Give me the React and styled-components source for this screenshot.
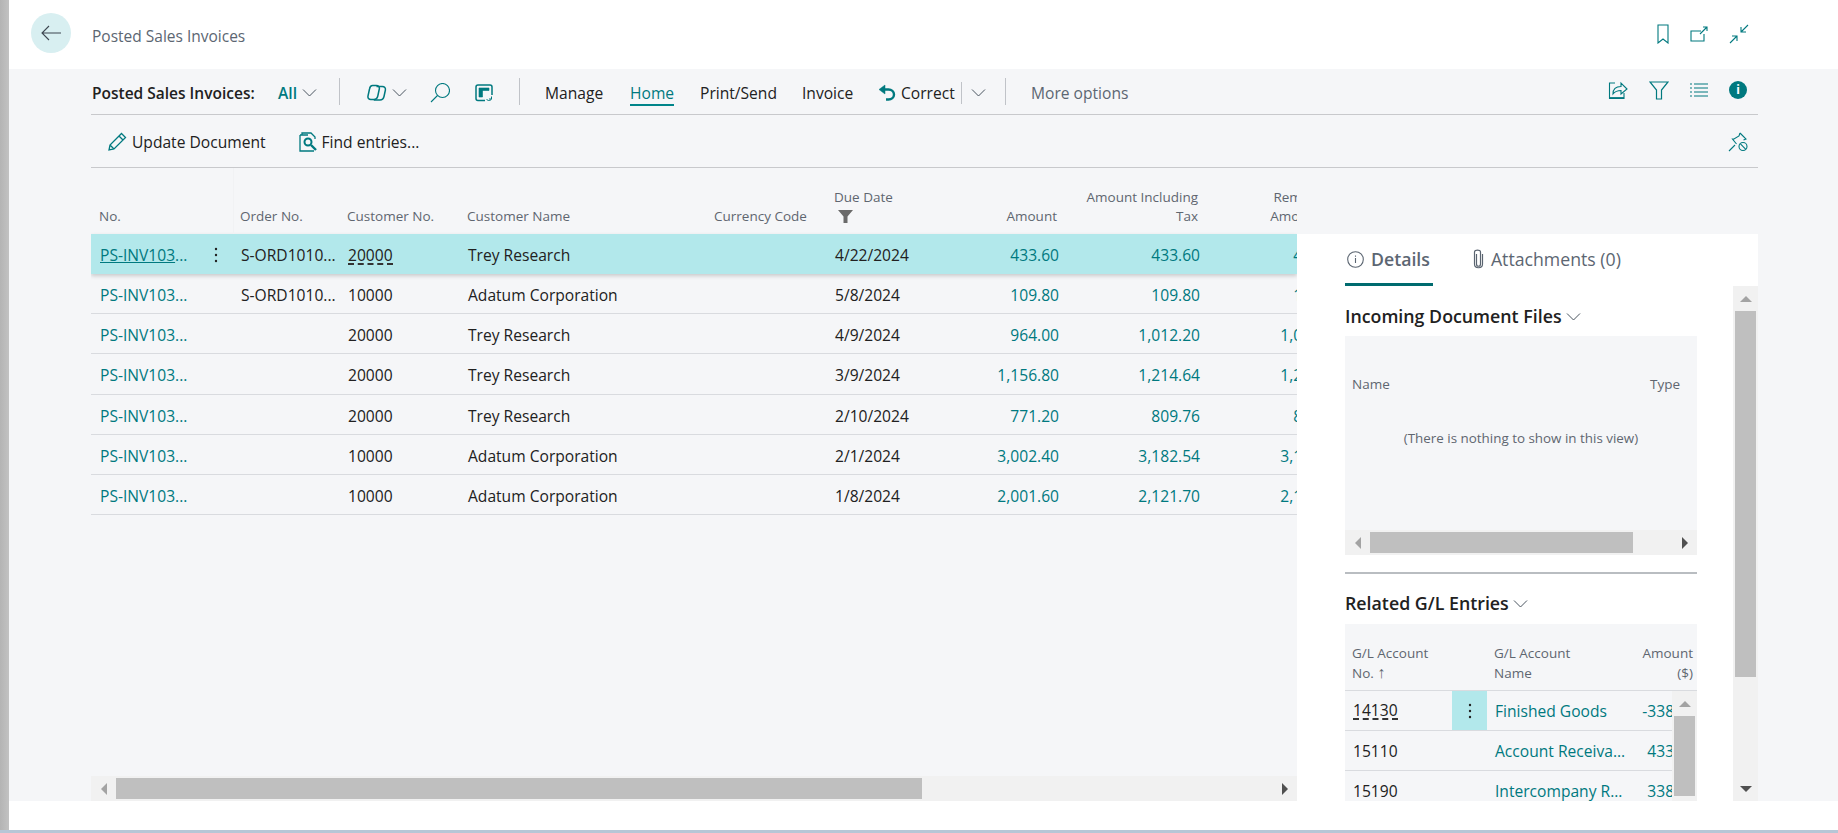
import styled, { createGlobalStyle } from 'styled-components';

const teal = '#00797f';

const invoices = [
  { no: 'PS-INV103...', order: 'S-ORD1010...', cust: '20000', name: 'Trey Research', due: '4/22/2024', amount: '433.60', incl: '433.60', rem: '433.60' },
  { no: 'PS-INV103...', order: 'S-ORD1010...', cust: '10000', name: 'Adatum Corporation', due: '5/8/2024', amount: '109.80', incl: '109.80', rem: '109.80' },
  { no: 'PS-INV103...', order: '', cust: '20000', name: 'Trey Research', due: '4/9/2024', amount: '964.00', incl: '1,012.20', rem: '1,012.20' },
  { no: 'PS-INV103...', order: '', cust: '20000', name: 'Trey Research', due: '3/9/2024', amount: '1,156.80', incl: '1,214.64', rem: '1,214.64' },
  { no: 'PS-INV103...', order: '', cust: '20000', name: 'Trey Research', due: '2/10/2024', amount: '771.20', incl: '809.76', rem: '809.76' },
  { no: 'PS-INV103...', order: '', cust: '10000', name: 'Adatum Corporation', due: '2/1/2024', amount: '3,002.40', incl: '3,182.54', rem: '3,182.54' },
  { no: 'PS-INV103...', order: '', cust: '10000', name: 'Adatum Corporation', due: '1/8/2024', amount: '2,001.60', incl: '2,121.70', rem: '2,121.70' },
];

const glEntries = [
  { no: '14130', name: 'Finished Goods', amount: '-338.00' },
  { no: '15110', name: 'Account Receiva...', amount: '433.60' },
  { no: '15190', name: 'Intercompany R...', amount: '338.00' },
];

const Chevron = ({ w = 15 }) => (
  <svg width={w} height={w} viewBox="0 0 15 15" fill="none" stroke="#4a5560" strokeWidth="1">
    <path d="M1 4.500l6.500 6.500L14 4.500" />
  </svg>
);

const Ico = ({ w = 20, h = 20, vb, children, sw = 1.1, color = teal }) => (
  <svg width={w} height={h} viewBox={vb || `0 0 ${w} ${h}`} fill="none" stroke={color} strokeWidth={sw}>
    {children}
  </svg>
);

const Dots = () => (
  <svg width="4" height="18" viewBox="0 0 4 18" fill="#222">
    <circle cx="2" cy="3" r="1.200" />
    <circle cx="2" cy="9" r="1.200" />
    <circle cx="2" cy="15" r="1.200" />
  </svg>
);

export default function App() {
  return (
    <>
      <GlobalStyle />
      <Page>
        <Strip />
        <Main>
          <TopBar>
            <BackButton>
              <Ico w={22} h={18} color="#3c4650" sw={1.1}>
                <path d="M21 9H2M9 2 2 9l7 7" />
              </Ico>
            </BackButton>
            <PageTitle>Posted Sales Invoices</PageTitle>
            <TopIcons>
              <Ico w={12} h={20}><path d="M1 1h10v18l-5-4-5 4z" /></Ico>
              <Ico w={18} h={16}><path d="M11 5H1v10h13V8M10 8l7-7M13 1h4v4" /></Ico>
              <Ico w={20} h={20}><path d="M19 1l-7 7M12 3v5h5M1 19l7-7M3 12h5v5" /></Ico>
            </TopIcons>
          </TopBar>
          <Content>
            <ActionBar>
              <Slot $w={186}><ListLabel>Posted Sales Invoices:</ListLabel></Slot>
              <Slot $w={61}><ViewName>All</ViewName><Chevron /></Slot>
              <Divider $w={28} />
              <Slot $w={63}>
                <Ico w={20} h={20} sw={1.5}>
                  <path d="M5.500 2.500h3.800c2.200 0 3.400 1.500 3 3.500l-1.500 7c-.5 2.300-1.900 3.500-4 3.500H3.800c-2 0-3.200-1.600-2.800-3.500L2.500 6c.4-2.200 1.500-3.500 3-3.500z" />
                  <path d="M9.500 3.500h5.800c2.200 0 3.500 1.500 3.100 3.500L17 13.500c-.5 2.200-2 3.500-4 3.500H6.800" />
                </Ico>
                <Chevron />
              </Slot>
              <Slot $w={45}>
                <Ico w={20} h={20}>
                  <circle cx="12.500" cy="7.500" r="7" />
                  <path d="M7.500 12.500 1 19" />
                </Ico>
              </Slot>
              <Slot $w={44}>
                <Ico w={18} h={18} sw={1.5}>
                  <path d="M10 16.500H3a2 2 0 0 1-2-2V3a2 2 0 0 1 2-2h12a2 2 0 0 1 2 2v8" />
                  <path d="M4 4h10v2.500H4zM4 6.500h3.500V13H4z" fill={teal} strokeWidth="0.600" />
                  <path d="M11.500 15c1 2 4 2 5 0M16.500 12.500V15H14" strokeWidth="1" />
                </Ico>
              </Slot>
              <Divider $w={26} />
              <Slot $w={85}><MenuItem>Manage</MenuItem></Slot>
              <Slot $w={70}><MenuItem $active>Home</MenuItem></Slot>
              <Slot $w={102}><MenuItem>Print/Send</MenuItem></Slot>
              <Slot $w={76}><MenuItem>Invoice</MenuItem></Slot>
              <Slot $w={83}>
                <Ico w={18} h={18} sw={2.4}>
                  <path d="M7 1 1 5.500 7 10z" fill={teal} strokeWidth="0.500" />
                  <path d="M6 5.500h4.500c3 0 5.500 2 5.500 5s-2.500 5-5.500 5H8" />
                </Ico>
                <MenuItem>Correct</MenuItem>
              </Slot>
              <SplitChevron><Chevron /></SplitChevron>
              <Divider $w={26} />
              <MoreOptions>More options</MoreOptions>
              <BarIcons>
                <Ico w={20} h={20}>
                  <path d="M7 3H1.500v15.500H16V13" />
                  <path d="M1.500 18h14.500" strokeWidth="1.800" />
                  <path d="M5 14c0-5 3-7.500 8-7.500V3l6 6-6 5v-3.500c-4 0-6 1-8 3.500z" />
                </Ico>
                <Ico w={20} h={20} sw={1.2}><path d="M1 2h18l-6.500 8v9h-5v-9z" /></Ico>
                <Ico w={18} h={14} sw={1}><path d="M0 1h2M4 1h14M0 5h2M4 5h14M0 9h2M4 9h14M0 13h2M4 13h14" /></Ico>
                <InfoDot>i</InfoDot>
              </BarIcons>
            </ActionBar>
            <SubBar>
              <SubAction>
                <Ico w={19} h={19} sw={1.3}><path d="M13.500 1.500l4 4L6 17l-5 1 1-5zM11 4l4 4M2 13l4 4" /></Ico>
                Update Document
              </SubAction>
              <SubAction>
                <Ico w={18} h={20} sw={1.3}>
                  <path d="M3 3V1h9l4 4v2M1 3h8M1 3v16h14" />
                  <circle cx="9" cy="10" r="3.500" strokeWidth="2" />
                  <path d="M12 13l5 5" strokeWidth="2.400" />
                </Ico>
                Find entries...
              </SubAction>
              <PinSlot>
                <Ico w={20} h={20}>
                  <path d="M12 1l6 6-2.500 1M12 1l-1 3-5 3-1.500 0 4 5M1 19l6-6" />
                  <circle cx="15" cy="14.500" r="4" />
                  <path d="M12.200 11.700l5.600 5.600" />
                </Ico>
              </PinSlot>
            </SubBar>
            <Body>
              <TableArea>
                <TableScroll>
                  <HeadRow>
                    <HeadCell $frozen>No.</HeadCell>
                    <HeadCell>Order No.</HeadCell>
                    <HeadCell>Customer No.</HeadCell>
                    <HeadCell>Customer Name</HeadCell>
                    <HeadCell>Currency Code</HeadCell>
                    <HeadCell>
                      Due Date
                      <FilterMark>
                        <svg width="15" height="13" viewBox="0 0 15 13" fill="#6a6a6a">
                          <path d="M0 0h15L9.500 6.500V13h-4V6.500z" />
                        </svg>
                      </FilterMark>
                    </HeadCell>
                    <HeadCell $right>Amount</HeadCell>
                    <HeadCell $right>Amount Including<br />Tax</HeadCell>
                    <HeadCell $right>Remaining<br />Amount ($)</HeadCell>
                  </HeadRow>
                  {invoices.map((inv, i) => (
                    <DataRow key={i} $selected={i === 0} $top={i === 0 ? 1 : i === 1 ? 2 : 3}>
                      <NoCell>
                        <InvoiceLink>
                          {i === 0 ? <u>PS-INV103</u> : 'PS-INV103'}...
                        </InvoiceLink>
                        {i === 0 && <Dots />}
                      </NoCell>
                      <Cell>{inv.order}</Cell>
                      <Cell>{i === 0 ? <DashedValue>{inv.cust}</DashedValue> : inv.cust}</Cell>
                      <Cell>{inv.name}</Cell>
                      <Cell />
                      <Cell>{inv.due}</Cell>
                      <Cell $right $link>{inv.amount}</Cell>
                      <Cell $right $link>{inv.incl}</Cell>
                      <Cell $right $link>{inv.rem}</Cell>
                    </DataRow>
                  ))}
                </TableScroll>
                <HScroll>
                  <ArrowBox><ArrowLeft /></ArrowBox>
                  <Thumb $size={806} />
                  <Spacer />
                  <ArrowBox><ArrowRight /></ArrowBox>
                </HScroll>
              </TableArea>
              <FactBox>
                <Tabs>
                  <Tab $active>
                    <Ico w={17} h={17} color="#5a6470">
                      <circle cx="8.500" cy="8.500" r="7.800" />
                      <path d="M8.500 7v5M8.500 4.500v1.200" />
                    </Ico>
                    Details
                  </Tab>
                  <Tab>
                    <Ico w={11} h={20} color="#5a6470" sw={1.2}>
                      <path d="M3.500 5v10c0 3 4 3 4 0V3c0-2.500-6-2.500-6 0v12c0 5 8 5 8 0V5" />
                    </Ico>
                    Attachments (0)
                  </Tab>
                </Tabs>
                <FactBody>
                  <FactContent>
                    <PartTitle>Incoming Document Files<Chevron /></PartTitle>
                    <EmptyPart>
                      <EmptyHead>
                        <span>Name</span>
                        <span>Type</span>
                      </EmptyHead>
                      <EmptyText>(There is nothing to show in this view)</EmptyText>
                      <HScroll>
                        <ArrowBox><ArrowLeft /></ArrowBox>
                        <Thumb $size={263} />
                        <Spacer />
                        <ArrowBox><ArrowRight /></ArrowBox>
                      </HScroll>
                    </EmptyPart>
                    <PartRule />
                    <PartTitle $short>Related G/L Entries<Chevron /></PartTitle>
                    <GlPart>
                      <GlHead>
                        <GlHeadCell>G/L Account<br />No. <SortUp>↑</SortUp></GlHeadCell>
                        <span />
                        <GlHeadCell>G/L Account<br />Name</GlHeadCell>
                        <GlHeadCell $right>Amount<br />($)</GlHeadCell>
                      </GlHead>
                      <GlBody>
                        <GlRows>
                          {glEntries.map((e, i) => (
                            <GlRow key={e.no}>
                              <GlNo>{i === 0 ? <DashedValue>{e.no}</DashedValue> : e.no}</GlNo>
                              <GlActions $on={i === 0}>{i === 0 && <Dots />}</GlActions>
                              <GlLink>{e.name}</GlLink>
                              <GlAmount>{e.amount}</GlAmount>
                            </GlRow>
                          ))}
                        </GlRows>
                        <VScroll>
                          <ArrowBox><ArrowUp /></ArrowBox>
                          <Thumb $size={80} $vertical />
                        </VScroll>
                      </GlBody>
                    </GlPart>
                  </FactContent>
                  <VScroll>
                    <ArrowBox><ArrowUp /></ArrowBox>
                    <Thumb $size={366} $vertical />
                    <Spacer />
                    <ArrowBox><ArrowDown /></ArrowBox>
                  </VScroll>
                </FactBody>
              </FactBox>
            </Body>
          </Content>
          <Footer />
        </Main>
      </Page>
      <BottomLine />
    </>
  );
}

const GlobalStyle = createGlobalStyle`
  html, body { margin: 0; padding: 0; background: #fff; overflow: hidden; }
  body { font-family: "Open Sans", "Noto Sans", sans-serif; color: #212121; }
  * { box-sizing: border-box; }
`;

const Page = styled.div`
  display: flex;
  height: 830px;
`;

const Strip = styled.div`
  width: 9px;
  flex: none;
  background: linear-gradient(90deg, #b4b4b4, #c2c2c2);
`;

const Main = styled.div`
  flex: 1;
  min-width: 0;
  display: flex;
  flex-direction: column;
`;

const BottomLine = styled.div`
  height: 3px;
  background: #b7c6d6;
`;

const TopBar = styled.div`
  height: 69px;
  flex: none;
  display: flex;
  align-items: center;
  padding: 0 89px 3px 22px;
  background: #fff;
`;

const BackButton = styled.div`
  width: 40px;
  height: 40px;
  border-radius: 50%;
  background: #d8eff1;
  display: flex;
  align-items: center;
  justify-content: center;
`;

const PageTitle = styled.div`
  margin-left: 21px;
  padding-top: 6px;
  font-size: 15.500px;
  color: #5c6672;
`;

const TopIcons = styled.div`
  margin-left: auto;
  margin-top: 1px;
  display: flex;
  align-items: center;
  gap: 21px;
`;

const Content = styled.div`
  flex: 1;
  min-height: 0;
  display: flex;
  flex-direction: column;
  padding: 0 80px 0 82px;
  background: #f5f6f8;
`;

const ActionBar = styled.div`
  height: 46px;
  flex: none;
  display: flex;
  align-items: center;
  padding: 2px 11px 0 1px;
  border-bottom: 1px solid #c8c9cc;
  font-size: 15.600px;
`;

const Slot = styled.div`
  width: ${p => p.$w}px;
  flex: none;
  display: flex;
  align-items: center;
  gap: 5px;
  white-space: nowrap;
`;

const ListLabel = styled.span`
  font-weight: 600;
  font-size: 15.500px;
`;

const ViewName = styled.span`
  color: ${teal};
  font-weight: 600;
`;

const Divider = styled.div`
  width: ${p => p.$w}px;
  flex: none;
  height: 27px;
  margin-top: -2px;
  background: linear-gradient(#c0c3c8, #c0c3c8) left center / 1px 100% no-repeat;
`;

const MenuItem = styled.span`
  display: inline-block;
  padding: 3px 0 0;
  border-bottom: 2px solid ${p => (p.$active ? '#00858a' : 'transparent')};
  color: ${p => (p.$active ? '#00797f' : '#212121')};
`;

const SplitChevron = styled.div`
  width: 44px;
  flex: none;
  height: 22px;
  display: flex;
  align-items: center;
  padding-left: 9px;
  border-left: 1px solid #c0c3c8;
`;

const MoreOptions = styled.span`
  color: #5c6672;
`;

const BarIcons = styled.div`
  margin-left: auto;
  display: flex;
  align-items: center;
  gap: 21px;
  margin-bottom: 6px;
`;

const InfoDot = styled.div`
  width: 18px;
  height: 18px;
  border-radius: 50%;
  background: ${teal};
  color: #fff;
  font-size: 12px;
  font-weight: 700;
  line-height: 18px;
  text-align: center;
`;

const SubBar = styled.div`
  height: 53px;
  flex: none;
  display: flex;
  align-items: center;
  gap: 33px;
  padding: 1px 10px 0 17px;
  border-bottom: 1px solid #c8c9cc;
  font-size: 15.600px;
`;

const SubAction = styled.div`
  display: flex;
  align-items: center;
  gap: 5px;
`;

const PinSlot = styled.div`
  margin-left: auto;
  display: flex;
`;

const Body = styled.div`
  flex: 1;
  min-height: 0;
  display: flex;
`;

const TableArea = styled.div`
  width: 1206px;
  flex: none;
  display: flex;
  flex-direction: column;
  justify-content: space-between;
`;

const TableScroll = styled.div`
  overflow: hidden;
`;

const columns = '143px 107px 120px 247px 120px 112px 126px 141px 142px';

const HeadRow = styled.div`
  width: 1258px;
  height: 66px;
  display: grid;
  grid-template-columns: ${columns};
  align-items: end;
`;

const HeadCell = styled.div`
  padding: ${p => (p.$frozen ? '39px' : '0')} ${p => (p.$right ? '9px' : '4px')} 8px ${p => (p.$frozen ? '8px' : '6px')};
  align-self: ${p => (p.$frozen ? 'stretch' : 'end')};
  font-size: 13.500px;
  line-height: 19px;
  color: #5f6670;
  text-align: ${p => (p.$right ? 'right' : 'left')};
  border-right: ${p => (p.$frozen ? '1px solid #f1f2f4' : '0')};
  white-space: nowrap;
`;

const FilterMark = styled.div`
  height: 19px;
  padding: 3px 0 0 4px;
  display: flex;
`;

const DataRow = styled.div`
  width: ${p => (p.$selected ? '1206px' : '1258px')};
  height: ${p => (p.$selected ? '40px' : '40.200px')};
  padding-top: ${p => p.$top}px;
  display: grid;
  grid-template-columns: ${columns};
  align-items: center;
  font-size: 15.600px;
  background: ${p => (p.$selected ? '#b2e8eb' : 'transparent')};
  border-bottom: ${p => (p.$selected ? '0' : '1px solid #d9dbdf')};
  box-shadow: ${p => (p.$selected ? '0 2px 4px rgba(0, 0, 0, 0.18)' : 'none')};
  overflow: ${p => (p.$selected ? 'hidden' : 'visible')};
  white-space: nowrap;
`;

const NoCell = styled.div`
  display: flex;
  align-items: center;
  justify-content: space-between;
  padding: 0 16px 0 9px;
`;

const InvoiceLink = styled.span`
  color: ${teal};
`;

const Cell = styled.div`
  padding: 0 7px;
  text-align: ${p => (p.$right ? 'right' : 'left')};
  color: ${p => (p.$link ? teal : '#212121')};
`;

const DashedValue = styled.span`
  border-bottom: 2px dashed #333;
  line-height: 15px;
  display: inline-block;
`;

const HScroll = styled.div`
  height: 25px;
  flex: none;
  display: flex;
  padding: 2px 0;
  background: #f1f1f1;
`;

const VScroll = styled.div`
  width: 25px;
  flex: none;
  display: flex;
  flex-direction: column;
  padding: 0 2px;
  background: #f1f1f1;
`;

const ArrowBox = styled.div`
  flex: none;
  width: 25px;
  height: 21px;
  display: flex;
  align-items: center;
  justify-content: center;
  ${VScroll} & {
    width: 21px;
    height: 25px;
  }
`;

const Thumb = styled.div`
  flex: none;
  width: ${p => (p.$vertical ? '21px' : `${p.$size}px`)};
  height: ${p => (p.$vertical ? `${p.$size}px` : '21px')};
  background: #bfbfbf;
`;

const Spacer = styled.div`
  flex: 1;
`;

const ArrowLeft = styled.div`
  border-style: solid;
  border-width: 6px 6px 6px 0;
  border-color: transparent #a3a3a3 transparent transparent;
`;

const ArrowRight = styled.div`
  border-style: solid;
  border-width: 6px 0 6px 6px;
  border-color: transparent transparent transparent #505050;
`;

const ArrowUp = styled.div`
  border-style: solid;
  border-width: 0 6px 6px;
  border-color: transparent transparent #a3a3a3;
`;

const ArrowDown = styled.div`
  border-style: solid;
  border-width: 6px 6px 0;
  border-color: #505050 transparent transparent;
`;

const FactBox = styled.div`
  flex: 1;
  min-width: 0;
  margin-top: 66px;
  display: flex;
  flex-direction: column;
  background: #fff;
`;

const Tabs = styled.div`
  height: 52px;
  flex: none;
  display: flex;
  gap: 38px;
  padding-left: 48px;
`;

const Tab = styled.div`
  display: flex;
  align-items: center;
  gap: 7px;
  padding: 1px ${p => (p.$active ? '3px' : '0')} 0 2px;
  font-size: 17.700px;
  font-weight: ${p => (p.$active ? 600 : 400)};
  color: #5c6672;
  border-bottom: 3px solid ${p => (p.$active ? '#006b6f' : 'transparent')};
`;

const FactBody = styled.div`
  flex: 1;
  min-height: 0;
  display: flex;
`;

const FactContent = styled.div`
  flex: 1;
  min-width: 0;
  padding: 0 36px 0 48px;
  overflow: hidden;
`;

const PartTitle = styled.div`
  height: 50px;
  display: flex;
  align-items: center;
  gap: 4px;
  padding-top: ${p => (p.$short ? '8px' : '10px')};
  font-size: 17.800px;
  font-weight: 600;
  white-space: nowrap;
`;

const EmptyPart = styled.div`
  height: 219px;
  display: flex;
  flex-direction: column;
  background: #f5f6f8;
`;

const EmptyHead = styled.div`
  height: 76px;
  flex: none;
  display: flex;
  align-items: flex-end;
  justify-content: space-between;
  padding: 0 17px 19px 7px;
  font-size: 13.500px;
  color: #5f6670;
`;

const EmptyText = styled.div`
  flex: 1;
  padding-top: 17px;
  text-align: center;
  font-size: 13.400px;
  color: #5f6670;
`;

const PartRule = styled.div`
  height: 2px;
  margin-top: 17px;
  background: #b9bdc1;
`;

const GlPart = styled.div`
  height: 177px;
  overflow: hidden;
  background: #f5f6f8;
`;

const glColumns = '107px 35px 153px 56px';

const GlHead = styled.div`
  height: 67px;
  display: grid;
  grid-template-columns: 107px 35px 1fr auto;
  align-items: end;
  padding-bottom: 7px;
  border-bottom: 1px solid #d9dbdf;
`;

const GlHeadCell = styled.div`
  font-size: 13.500px;
  line-height: 20px;
  color: #5f6670;
  padding: ${p => (p.$right ? '0 4px 0 0' : '0 0 0 7px')};
  text-align: ${p => (p.$right ? 'right' : 'left')};
  white-space: nowrap;
`;

const SortUp = styled.span`
  font-size: 16px;
  line-height: 0;
  font-weight: 600;
`;

const GlBody = styled.div`
  height: 110px;
  display: flex;
`;

const GlRows = styled.div`
  flex: 1;
  min-width: 0;
  overflow: hidden;
`;

const GlRow = styled.div`
  width: 351px;
  height: 40px;
  display: grid;
  grid-template-columns: ${glColumns};
  align-items: stretch;
  font-size: 15.600px;
  white-space: nowrap;
  border-bottom: 1px solid #d9dbdf;
`;

const GlNo = styled.div`
  display: flex;
  align-items: center;
  padding: 1px 0 0 8px;
`;

const GlActions = styled.div`
  display: flex;
  align-items: center;
  justify-content: center;
  background: ${p => (p.$on ? '#b2e8eb' : 'transparent')};
`;

const GlLink = styled.div`
  display: flex;
  align-items: center;
  padding: 1px 0 0 8px;
  color: ${teal};
`;

const GlAmount = styled.div`
  display: flex;
  align-items: center;
  justify-content: flex-end;
  padding-top: 1px;
  color: ${teal};
`;

const Footer = styled.div`
  height: 29px;
  flex: none;
  background: #fff;
`;
